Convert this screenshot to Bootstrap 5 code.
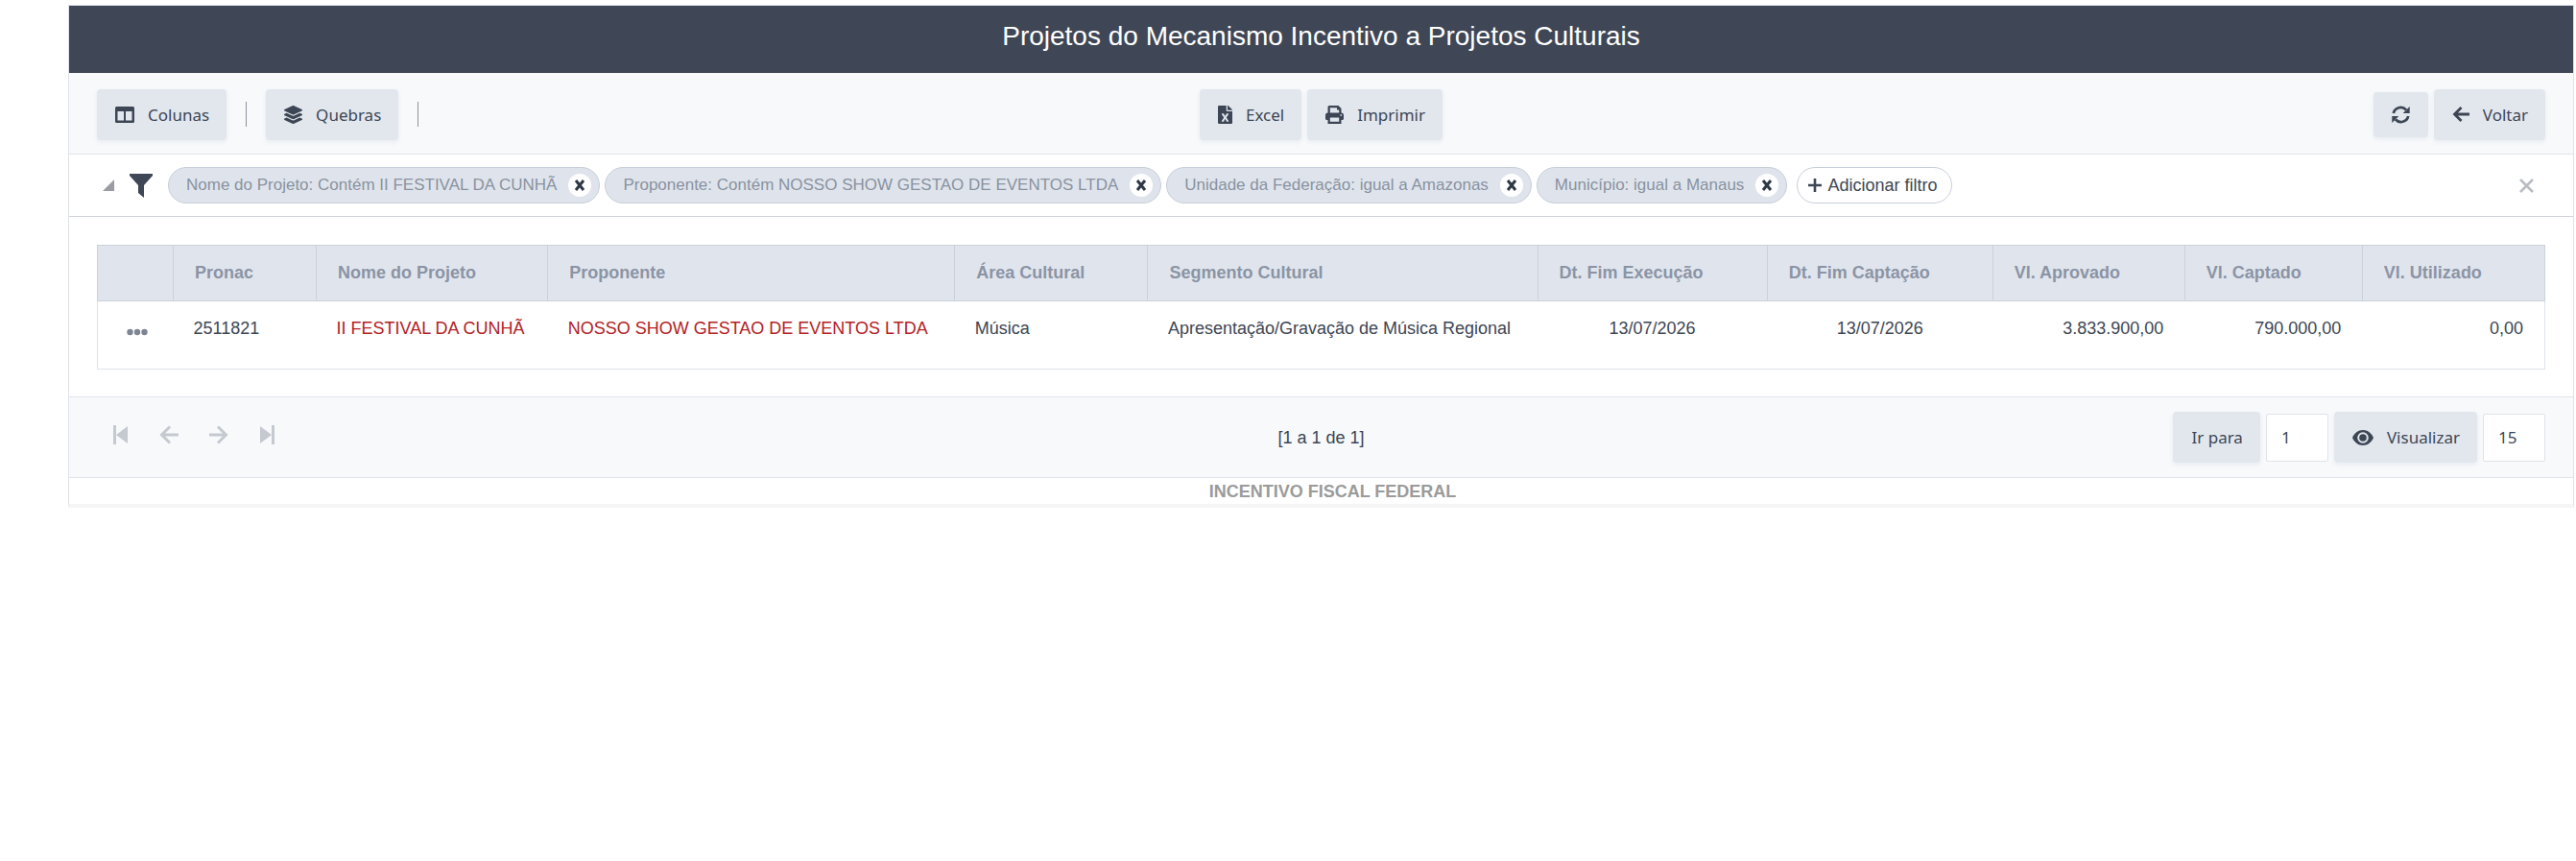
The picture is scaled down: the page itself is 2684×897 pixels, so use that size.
<!DOCTYPE html>
<html lang="pt-BR">
<head>
<meta charset="utf-8">
<meta name="viewport" content="width=device-width, initial-scale=1">
<title>Projetos do Mecanismo Incentivo a Projetos Culturais</title>
<link rel="stylesheet" href="https://cdn.jsdelivr.net/npm/bootstrap@5.3.0/dist/css/bootstrap.min.css">
<style>
  :root { --ink: #3d4654; --soft: #e2e7ee; --line: #dfe3ea; --muted: #8b94a5; }
  body { font-family: "Liberation Sans", Arial, sans-serif; font-size: 18px; line-height: 24px; color: var(--ink); background: #fff; }
  .report { margin: 5px 2px 0 71px; border: 1px solid var(--line); border-bottom: 4px solid #f5f5f5; }
  .report-title { background: #3f4756; color: #fff; font-size: 28px; line-height: 36px; font-weight: 400; padding: 14px 0 20px; }
  .bar { display: grid; grid-template-columns: 1fr auto 1fr; align-items: center; background: #f7f9fb; padding: 0 29px; }
  .bar-top { height: 85px; padding-top: 2px; border-bottom: 1px solid var(--line); }
  .bar-bottom { height: 85px; border: solid var(--line); border-width: 1px 0; }
  .tools { display: flex; align-items: center; gap: 6px; }
  .tool { font-family: "Noto Sans", sans-serif; font-size: 17px; line-height: 25px; color: var(--ink); background: var(--soft); border: 0; border-radius: 4px; padding: 14px 18px 14px 19px; display: inline-flex; align-items: center; gap: 14px; box-shadow: 0 2px 5px rgba(60,80,110,.08); }
  .tool:hover { background: #d8dfe8; }
  .tool-square { padding: 14px 19px; line-height: 19px; }
  .tool svg { fill: currentColor; flex: none; }
  .rule { width: 1px; height: 26px; background: #8d929a; margin: 0 20px; }
  .filters { height: 65px; padding: 0 40px 0 35px; border-bottom: 1px solid #cfd3d8; }
  .chips { display: flex; gap: 5px; }
  .chip { height: 38px; border: 1px solid #c8cfd8; border-radius: 19px; background: #dfe4ec; color: #8992a0; font-size: 17px; padding: 0 8px 0 18px; display: inline-flex; align-items: center; gap: 12px; }
  .chip-x { width: 24px; height: 24px; border: 0; border-radius: 50%; background: #fff; padding: 0; display: flex; align-items: center; justify-content: center; }
  .chip-add { background: #fff; color: var(--ink); font-size: 18px; padding: 0 15px 0 11px; gap: 6px; margin-left: 5px; }
  .plain { border: 0; background: none; padding: 0; display: inline-flex; }
  .grid-wrap { padding: 29px 29px 28px; }
  .data { table-layout: fixed; width: 100%; border: 1px solid var(--line); border-collapse: collapse; }
  .data th { background: #e0e5ed; color: var(--muted); border: 1px solid #cbd1da; padding: 16px 21px 17px 22px; white-space: nowrap; }
  .data td { padding: 16px 21px 30px; white-space: nowrap; }
  .data td.text-end { padding-right: 22px; }
  .data td .plain { vertical-align: text-bottom; }
  .data a { color: #b3211f; text-decoration: none; }
  .pager { gap: 32px; padding-left: 17px; padding-bottom: 5px; }
  .num { font-family: "Noto Sans", sans-serif; font-size: 17px; color: var(--ink); width: 65px; height: 50px; border: 1px solid var(--line); background: #fff; padding: 0 15px; border-radius: 2px; }
  .caption-row { color: #9b9b9b; font-weight: 700; line-height: 28px; height: 27px; padding-left: 24px; }
</style>
</head>
<body>
<svg class="d-none" xmlns="http://www.w3.org/2000/svg">
  <symbol id="i-x" viewBox="0 0 12 12"><path d="M2 1l8 10M10 1L2 11" fill="none" stroke="#2f3845" stroke-width="3"/></symbol>
  <symbol id="i-left" viewBox="0 0 18 18"><path d="M9.500 2L2.500 9l7 7M3 9h15" fill="none" stroke="currentColor" stroke-width="2.800"/></symbol>
</svg>
<main class="report">
  <h1 class="report-title text-center m-0">Projetos do Mecanismo Incentivo a Projetos Culturais</h1>

  <div class="bar bar-top">
    <div class="d-flex align-items-center">
      <button type="button" class="tool"><svg width="20" height="17" viewBox="0 0 20 17"><path fill-rule="evenodd" d="M1.500 0h17Q20 0 20 1.500v14q0 1.500-1.500 1.500h-17Q0 17 0 15.500v-14Q0 0 1.500 0zM2.500 5v9.500H9V5zM11 5v9.500h6.500V5z"/></svg>Colunas</button>
      <span class="rule"></span>
      <button type="button" class="tool"><svg width="19" height="19" viewBox="0 0 512 512"><path d="M12.410 148.020l232.940 105.670c6.800 3.090 14.490 3.090 21.290 0l232.940-105.670c16.550-7.510 16.550-32.520 0-40.030L266.650 2.310a25.607 25.607 0 0 0-21.290 0L12.410 107.980c-16.550 7.510-16.550 32.530 0 40.040zm487.180 88.280l-58.090-26.330-161.640 73.270c-7.560 3.430-15.590 5.170-23.860 5.170s-16.290-1.740-23.860-5.170L70.510 209.970l-58.100 26.330c-16.550 7.500-16.550 32.500 0 40l232.940 105.590c6.800 3.080 14.490 3.080 21.290 0L499.590 276.300c16.550-7.500 16.550-32.500 0-40zm0 127.800l-57.870-26.230-161.860 73.370c-7.560 3.430-15.590 5.170-23.860 5.170s-16.290-1.740-23.860-5.170L70.290 337.870 12.410 364.100c-16.550 7.500-16.550 32.500 0 40l232.940 105.590c6.800 3.080 14.490 3.080 21.290 0L499.590 404.100c16.550-7.500 16.550-32.500 0-40z"/></svg>Quebras</button>
      <span class="rule"></span>
    </div>
    <div class="tools">
      <button type="button" class="tool"><svg width="15" height="19" viewBox="0 0 384 512" preserveAspectRatio="none"><path d="M224 136V0H24C10.700 0 0 10.700 0 24v464c0 13.300 10.700 24 24 24h336c13.300 0 24-10.700 24-24V160H248c-13.200 0-24-10.800-24-24zm60.100 106.500L224 336l60.100 93.500c5.100 8-.6 18.500-10.100 18.500h-34.900c-4.400 0-8.500-2.400-10.600-6.300C208.900 405.500 192 373 192 373c-6.400 14.800-10 20-36.600 68.800-2.100 3.900-6.100 6.300-10.500 6.300H110c-9.500 0-15.200-10.500-10.100-18.500l60.300-93.500-60.300-93.500c-5.200-8 .6-18.500 10.100-18.500h34.800c4.400 0 8.500 2.400 10.600 6.300 26.100 48.800 20 33.600 36.600 68.500 0 0 6.100-11.700 36.600-68.500 2.100-3.900 6.200-6.300 10.600-6.300H274c9.500-.1 15.200 10.400 10.100 18.400zM384 121.900v6.100H256V0h6.100c6.400 0 12.500 2.500 17 7l97.900 98c4.500 4.500 7 10.600 7 16.900z"/></svg>Excel</button>
      <button type="button" class="tool"><svg width="19" height="19" viewBox="0 0 19 19"><path fill-rule="evenodd" d="M4 0h9.500L16.500 3v4.500Q19 7.500 19 10v3.500q0 1.500-1.500 1.500h-1v4h-14v-4h-1Q0 15 0 13.500V10Q0 7.500 2.500 7.500V1.500Q2.500 0 4 0zM4.800 2.200v5.300h9.400V4.500H12V2.200zM4.800 12.500v4.300h9.400v-4.300zM15.500 9.300v1.500H17V9.300z"/></svg>Imprimir</button>
    </div>
    <div class="tools justify-content-end">
      <button type="button" class="tool tool-square" aria-label="Atualizar"><svg width="19" height="19" viewBox="0 0 19 19"><path d="M1.800 8A7.700 7.700 0 0 1 15 4.500M17.200 11A7.700 7.700 0 0 1 4 14.500" fill="none" stroke="currentColor" stroke-width="2.800"/><path d="M18.700 1v7h-7zM.3 18v-7h7z"/></svg></button>
      <button type="button" class="tool"><svg width="18" height="18"><use href="#i-left"/></svg>Voltar</button>
    </div>
  </div>

  <div class="filters d-flex align-items-center">
    <svg width="12" height="12" viewBox="0 0 12 12" class="me-3"><path d="M12 0v12H0z" fill="#999da3"/></svg>
    <svg width="24" height="25" viewBox="0 0 24 25" class="me-3"><path d="M0 0h24v2L15 12v13l-6-5v-8L0 2z" fill="#3f4756"/></svg>
    <div class="chips">
      <span class="chip">Nome do Projeto: Contém II FESTIVAL DA CUNHÃ<button type="button" class="chip-x" aria-label="Remover filtro"><svg width="12" height="12"><use href="#i-x"/></svg></button></span>
      <span class="chip">Proponente: Contém NOSSO SHOW GESTAO DE EVENTOS LTDA<button type="button" class="chip-x" aria-label="Remover filtro"><svg width="12" height="12"><use href="#i-x"/></svg></button></span>
      <span class="chip">Unidade da Federação: igual a Amazonas<button type="button" class="chip-x" aria-label="Remover filtro"><svg width="12" height="12"><use href="#i-x"/></svg></button></span>
      <span class="chip">Município: igual a Manaus<button type="button" class="chip-x" aria-label="Remover filtro"><svg width="12" height="12"><use href="#i-x"/></svg></button></span>
      <button type="button" class="chip chip-add"><svg width="14" height="14" viewBox="0 0 14 14"><path d="M7 0v14M0 7h14" stroke="currentColor" stroke-width="2.600"/></svg>Adicionar filtro</button>
    </div>
    <button type="button" class="plain ms-auto" aria-label="Fechar filtros"><svg width="17" height="15" viewBox="0 0 17 15"><path d="M2 1l13 13M15 1L2 14" stroke="#b9bdc2" stroke-width="2.600"/></svg></button>
  </div>

  <div class="grid-wrap">
    <table class="data">
      <colgroup><col style="width:79px"><col style="width:149px"><col style="width:241px"><col style="width:424px"><col style="width:201px"><col style="width:406px"><col style="width:239px"><col style="width:235px"><col style="width:200px"><col style="width:185px"><col style="width:190px"></colgroup>
      <thead><tr><th></th><th>Pronac</th><th>Nome do Projeto</th><th>Proponente</th><th>Área Cultural</th><th>Segmento Cultural</th><th>Dt. Fim Execução</th><th>Dt. Fim Captação</th><th>Vl. Aprovado</th><th>Vl. Captado</th><th>Vl. Utilizado</th></tr></thead>
      <tbody><tr>
        <td class="text-center ps-1 pe-0"><button type="button" class="plain" aria-label="Opções"><svg width="22" height="12" viewBox="0 0 22 12"><g fill="#7d8592"><circle cx="3.500" cy="6" r="3.200"/><circle cx="11" cy="6" r="3.200"/><circle cx="18.500" cy="6" r="3.200"/></g></svg></button></td>
        <td>2511821</td>
        <td><a href="#">II FESTIVAL DA CUNHÃ</a></td>
        <td><a href="#">NOSSO SHOW GESTAO DE EVENTOS LTDA</a></td>
        <td>Música</td>
        <td>Apresentação/Gravação de Música Regional</td>
        <td class="text-center">13/07/2026</td>
        <td class="text-center">13/07/2026</td>
        <td class="text-end">3.833.900,00</td>
        <td class="text-end">790.000,00</td>
        <td class="text-end">0,00</td>
      </tr></tbody>
    </table>
  </div>

  <div class="bar bar-bottom">
    <nav class="pager d-flex align-items-center" aria-label="Paginação">
      <button type="button" class="plain" disabled aria-label="Primeira"><svg width="16" height="20" viewBox="0 0 16 20" fill="#c5c9d0"><path d="M0 0h3v20H0zM15 1v18L3 10z"/></svg></button>
      <button type="button" class="plain" disabled aria-label="Anterior"><svg width="20" height="20" viewBox="0 0 20 20" fill="none" stroke="#c5c9d0" stroke-width="3"><path d="M11 1.500L2.500 10l8.500 8.500M3 10h17"/></svg></button>
      <button type="button" class="plain" disabled aria-label="Próxima"><svg width="20" height="20" viewBox="0 0 20 20" fill="none" stroke="#c5c9d0" stroke-width="3"><path d="M9 1.500l8.500 8.500L9 18.500M17 10H0"/></svg></button>
      <button type="button" class="plain" disabled aria-label="Última"><svg width="16" height="20" viewBox="0 0 16 20" fill="#c5c9d0"><path d="M13 0h3v20h-3zM1 1v18l12-9z"/></svg></button>
    </nav>
    <span>[1 a 1 de 1]</span>
    <div class="tools justify-content-end">
      <button type="button" class="tool" id="go">Ir para</button>
      <input class="num" type="text" value="1" aria-labelledby="go">
      <button type="button" class="tool" id="view"><svg width="22" height="16" viewBox="0 0 22 16"><path fill-rule="evenodd" d="M11 0c5 0 9 3.500 11 8-2 4.500-6 8-11 8S2 12.500 0 8C2 3.500 6 0 11 0zm0 2.200a5.800 5.800 0 1 0 0 11.600 5.800 5.800 0 0 0 0-11.600z"/><circle cx="11" cy="8" r="3.800"/></svg>Visualizar</button>
      <input class="num" type="text" value="15" aria-labelledby="view">
    </div>
  </div>
  <div class="caption-row text-center">INCENTIVO FISCAL FEDERAL</div>
</main>
<script src="https://cdn.jsdelivr.net/npm/bootstrap@5.3.0/dist/js/bootstrap.bundle.min.js"></script>
</body>
</html>
